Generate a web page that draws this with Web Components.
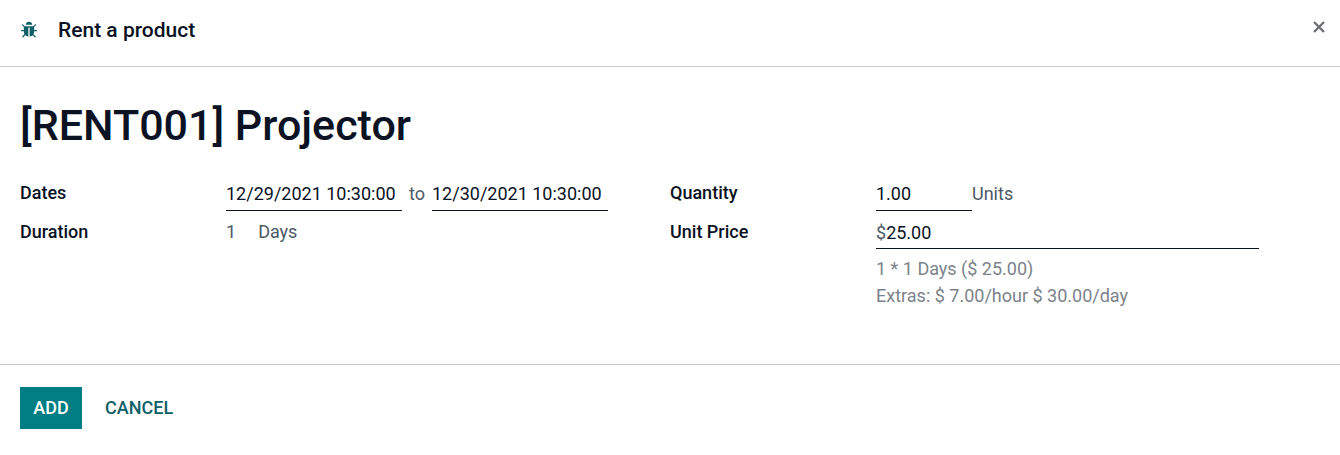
<!DOCTYPE html>
<html lang="en">
<head>
<meta charset="utf-8">
<meta name="viewport" content="width=device-width, initial-scale=1">
<title>Rent a product</title>
<style>
  body {
    margin: 0;
    background: #fff;
    color: #495057;
    font: 400 18px/27px Roboto, sans-serif;
    --ink: #0a1224;
    --text: #4c5a67;
    --muted: #7c838b;
    --line: #c9c8d1;
    --accent: #017e84;
    --link: #0f5f68;
  }
</style>
</head>
<body>
<rent-dialog>
  <dialog-header slot="header">Rent a product</dialog-header>
  <rental-form></rental-form>
  <dialog-footer slot="footer"></dialog-footer>
</rent-dialog>

<template id="rent-dialog">
  <style>
    :host { display: block; }
    main { padding: 32px 20px 55px; }
  </style>
  <slot name="header"></slot>
  <main><slot></slot></main>
  <slot name="footer"></slot>
</template>

<template id="dialog-header">
  <style>
    :host { display: block; border-bottom: 1px solid var(--line); }
    header { display: flex; align-items: center; gap: 20px; padding: 15px 12px 21px 20px; }
    h4 { flex: 1; margin: 0; font: 500 21px/30px Roboto, sans-serif; color: var(--ink); }
    .debug { display: flex; color: var(--link); }
    .debug svg { width: 18px; height: 18px; }
    .close { align-self: flex-start; display: flex; padding: 5px 2px; border: 0; background: none; color: #6f7076; cursor: pointer; }
    .close svg { width: 14px; height: 14px; }
  </style>
  <header>
    <a class="debug" href="#debug" aria-label="Developer tools">
      <svg viewBox="0 0 1792 1792" fill="currentColor" aria-hidden="true"><path d="M1696 960q0 26-19 45t-45 19h-224q0 171-67 290l208 209q19 19 19 45t-19 45q-18 19-45 19t-45-19l-198-197q-5 5-15 13t-42 28.500-65 36.500-82 29-97 13v-896h-128v896q-51 0-101.500-13.500t-87-33-66-39-43.500-32.500l-15-14-183 207q-20 21-48 21-24 0-43-16-19-18-20.500-44.500t15.500-46.500l202-227q-58-114-58-274h-224q-26 0-45-19t-19-45 19-45 45-19h224v-294l-173-173q-19-19-19-45t19-45 45-19 45 19l173 173h844l173-173q19-19 45-19t45 19 19 45-19 45l-173 173v294h224q26 0 45 19t19 45zm-480-576h-640q0-133 93.500-226.500t226.500-93.500 226.500 93.500 93.500 226.500z"/></svg>
    </a>
    <h4><slot></slot></h4>
    <button class="close" type="button" aria-label="Close">
      <svg viewBox="0 0 14 14" fill="none" stroke="currentColor" stroke-width="2.400" aria-hidden="true"><path d="M2 2l10 10M12 2L2 12"/></svg>
    </button>
  </header>
</template>

<template id="rental-form">
  <style>
    :host { display: block; color: var(--text); }
    h1 { margin: 0 0 27px; font: 500 43px/52px Roboto, sans-serif; color: var(--ink); }
    .columns { display: grid; grid-template-columns: 1fr 1fr; }
    .fields { display: grid; grid-template-columns: 206px minmax(0, 383px); grid-auto-rows: min-content; }
    label { color: var(--ink); font-weight: 500; line-height: 30px; }
    .value { display: flex; line-height: 32px; min-width: 0; }
    .dates { justify-content: space-between; padding-right: 1px; }
    .row-end { margin-bottom: 6px; }
    input { box-sizing: border-box; min-width: 0; height: 33px; margin: 0; padding: 0 0 2px; border: 0; border-bottom: 1px solid var(--ink); border-radius: 0; background: none; font: inherit; color: var(--ink); outline: 0; }
    .date { width: 176px; }
    .qty { width: 96px; }
    .money { border-bottom: 1px solid var(--ink); line-height: 31px; }
    .money input { flex: 1; height: 31px; padding: 0; border: 0; }
    .duration { gap: 22px; line-height: 30px; }
    .notes { grid-column: 2; padding-top: 6px; color: var(--muted); }
    p { margin: 0; }
  </style>
  <h1>[RENT001] Projector</h1>
  <div class="columns">
    <div class="fields">
      <label for="from">Dates</label>
      <div class="value dates row-end">
        <input id="from" class="date" type="text" value="12/29/2021 10:30:00">
        <span>to</span>
        <input class="date" type="text" value="12/30/2021 10:30:00" aria-label="Return date">
      </div>
      <label for="duration">Duration</label>
      <output id="duration" class="value duration"><span>1</span><span>Days</span></output>
    </div>
    <div class="fields">
      <label for="qty">Quantity</label>
      <div class="value row-end">
        <input id="qty" class="qty" type="text" value="1.00">
        <span>Units</span>
      </div>
      <label for="price">Unit Price</label>
      <div class="value money">
        <span>$</span><input id="price" type="text" value="25.00">
      </div>
      <div class="notes">
        <p>1 * 1 Days ($ 25.00)</p>
        <p>Extras: $ 7.00/hour $ 30.00/day</p>
      </div>
    </div>
  </div>
</template>

<template id="dialog-footer">
  <style>
    :host { display: block; border-top: 1px solid var(--line); }
    footer { display: flex; gap: 10px; padding: 22px 20px 26px; }
    button { min-width: 62px; height: 42px; padding: 0 13px 2px; border: 0; border-radius: 0; background: none; font: 500 18px/27px Roboto, sans-serif; text-transform: uppercase; color: var(--link); cursor: pointer; }
    .primary { background: var(--accent); color: #fff; }
  </style>
  <footer>
    <button class="primary" type="button">Add</button>
    <button type="button">Cancel</button>
  </footer>
</template>

<script>
  class TemplateElement extends HTMLElement {
    constructor() {
      super();
      const template = document.getElementById(this.localName);
      this.attachShadow({ mode: "open" }).append(template.content.cloneNode(true));
    }
  }
  customElements.define("rent-dialog", class extends TemplateElement {});
  customElements.define("dialog-header", class extends TemplateElement {});
  customElements.define("rental-form", class extends TemplateElement {});
  customElements.define("dialog-footer", class extends TemplateElement {});
</script>
</body>
</html>
